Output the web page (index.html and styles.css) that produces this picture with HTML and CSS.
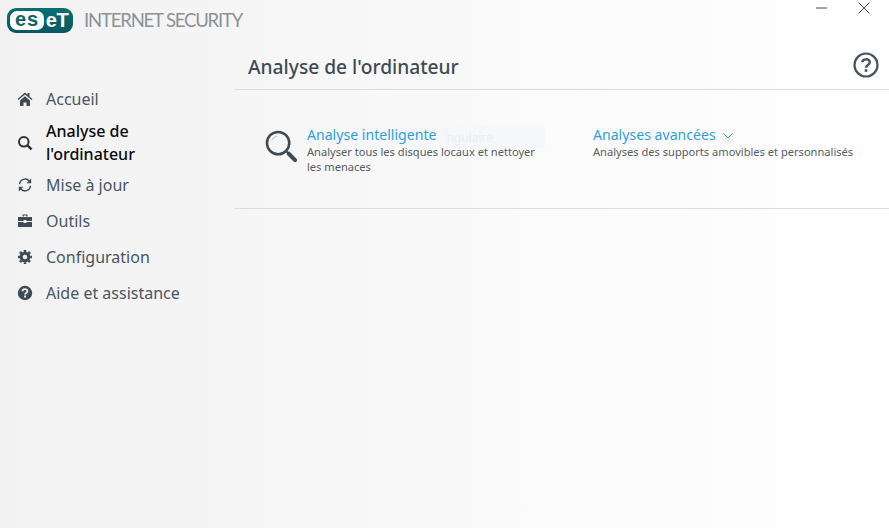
FILE: index.html
```html
<!DOCTYPE html>
<html lang="fr">
<head>
<meta charset="utf-8">
<title>ESET Internet Security</title>
<link rel="stylesheet" href="styles.css">
</head>
<body>
<div class="app">
  <aside class="sidebar">
    <div class="brand">
      <div class="logo"><span class="logo-white">es</span><span class="logo-dark">eT</span></div>
      <span class="product">INTERNET SECURITY</span>
    </div>
    <nav class="nav">
      <a class="nav-item">
        <svg class="nav-icon" viewBox="0 0 16 16"><path fill="#3f4a54" d="M8 1.600 0.600 8l.8 1L8 3.400 14.600 9l.8-1-2.900-2.500V2h-2v1.800zM3 9.500V15h3.500v-3.500h3V15H13V9.500L8 5.200z"/></svg>
        <span>Accueil</span>
      </a>
      <a class="nav-item active">
        <svg class="nav-icon" viewBox="0 0 16 16"><circle cx="6.800" cy="6.800" r="4.800" fill="none" stroke="#2c343b" stroke-width="2"/><path d="M10.400 10.400 14.600 14.400" stroke="#2c343b" stroke-width="2.400"/></svg>
        <span>Analyse de<br>l'ordinateur</span>
      </a>
      <a class="nav-item">
        <svg class="nav-icon" viewBox="0 0 16 16"><path fill="none" stroke="#3f4a54" stroke-width="1.500" d="M2.500 7.200A5.600 5.600 0 0 1 12.400 4.200M13.500 8.800A5.600 5.600 0 0 1 3.600 11.800"/><path fill="#3f4a54" d="M14.200 1.500v4.700H9.600zM1.800 14.500V9.800h4.600z"/></svg>
        <span>Mise à jour</span>
      </a>
      <a class="nav-item">
        <svg class="nav-icon" viewBox="0 0 16 16"><path fill="#3f4a54" d="M5.500 3.500V1.500h5v2h-1.200v-.9H6.700v.9zM1 4h14v4H9.500V7h-3v1H1zM1 9h5.500v1h3V9H15v5H1z"/></svg>
        <span>Outils</span>
      </a>
      <a class="nav-item">
        <svg class="nav-icon" viewBox="0 0 16 16"><circle cx="8" cy="8" r="3.800" fill="none" stroke="#3f4a54" stroke-width="3"/><g stroke="#3f4a54" stroke-width="2.600"><path d="M8 1v14M1 8h14M3 3l10 10M13 3 3 13" stroke-dasharray="2.600 9.600"/></g></svg>
        <span>Configuration</span>
      </a>
      <a class="nav-item">
        <svg class="nav-icon" viewBox="0 0 16 16"><circle cx="8" cy="8" r="7.200" fill="#3f4a54"/><path d="M5.500 6.300C5.600 3.500 10.500 3.500 10.500 6.200c0 1.800-2.400 1.800-2.400 3.300" fill="none" stroke="#f3f3f3" stroke-width="1.800"/><rect x="7.100" y="10.500" width="2" height="2" fill="#f3f3f3"/></svg>
        <span>Aide et assistance</span>
      </a>
    </nav>
  </aside>
  <main class="main">
    <div class="winbar">
      <svg class="win-btn" viewBox="0 0 12 12"><path d="M0 6h11" stroke="#3f4a54" stroke-width="1"/></svg>
      <svg class="win-btn" viewBox="0 0 12 12"><path d="M.5.500l11 11M11.500.500l-11 11" stroke="#3f4a54" stroke-width="1"/></svg>
    </div>
    <header class="page-head">
      <h1>Analyse de l'ordinateur</h1>
      <svg class="help" viewBox="0 0 26 26"><circle cx="13" cy="13" r="11.500" fill="none" stroke="#48535c" stroke-width="2.200"/><path d="M9.300 10.300C9.500 6.400 16.800 6.300 16.800 10.200c0 2.800-3.800 2.700-3.800 5.500" fill="none" stroke="#48535c" stroke-width="2.400"/><rect x="11.700" y="17.200" width="2.600" height="2.600" fill="#48535c"/></svg>
    </header>
    <section class="actions">
      <div class="action action-smart">
        <svg class="scan-icon" viewBox="0 0 34 34"><circle cx="13.500" cy="13.500" r="11.500" fill="none" stroke="#3f4a54" stroke-width="2.600"/><path d="M7 11a7 7 0 0 1 6-4.800" fill="none" stroke="#c9ced2" stroke-width="1.300"/><path d="M22 22l2.500 2.500" stroke="#3f4a54" stroke-width="2"/><path d="M24.500 24.500 31 31" stroke="#3f4a54" stroke-width="4.200" stroke-linecap="round"/></svg>
        <div class="action-text">
          <a class="action-title">Analyse intelligente</a>
          <p class="action-desc">Analyser tous les disques locaux et nettoyer les menaces</p>
        </div>
        <div class="ghost">ngulaire</div>
      </div>
      <div class="action action-adv">
        <div class="action-text">
          <a class="action-title">Analyses avancées<svg class="chev" viewBox="0 0 10 6"><path d="M.5.500 5 5 9.500.500" fill="none" stroke="#2f9fdc" stroke-width="1"/></svg></a>
          <p class="action-desc">Analyses des supports amovibles et personnalisés</p>
        </div>
      </div>
    </section>
  </main>
</div>
</body>
</html>
```
FILE: styles.css
```css
* { box-sizing: border-box; }
html, body { margin: 0; height: 100%; }
body {
  font-family: "Noto Sans", "Open Sans", sans-serif;
  overflow: hidden;
  background: linear-gradient(90deg, #f2f2f2 0%, #f5f5f5 25%, #fbfbfb 65%, #ffffff 100%);
}
.app { display: flex; width: 889px; height: 528px; }
.sidebar { width: 234px; flex: none; }
.main { flex: 1; display: flex; flex-direction: column; }
.brand { display: flex; gap: 11px; padding: 8px 0 0 7px; height: 81px; align-items: flex-start; }
.logo {
  display: flex; width: 66px; height: 25px; border-radius: 9px; background: linear-gradient(180deg, #0a6f74, #07585e);
  padding: 3px; font-family: "Liberation Sans", sans-serif; font-weight: 700; font-size: 20px; line-height: 17px; color: #fff; overflow: hidden; flex: none;
}
.logo-white { width: 34px; background: #fff; color: #0a6469; border-radius: 7px; text-align: center; letter-spacing: 1px; line-height: 17px; }
.logo-dark { flex: 1; text-align: center; line-height: 19px; letter-spacing: -0.500px; }
.product { font-family: "Lato", sans-serif; font-size: 18.500px; letter-spacing: -1.170px; color: #8a9299; line-height: 25px; white-space: nowrap; }
.nav { display: flex; flex-direction: column; }
.nav-item { display: flex; align-items: center; gap: 13px; padding-left: 17px; min-height: 36px; font-size: 16px; line-height: 23px; color: #4a5660; }
.nav-item.active { color: #0a0a0a; font-weight: 500; min-height: 50px; padding-top: 2px; }
.nav-icon { width: 16px; height: 16px; flex: none; }
.winbar { height: 44px; display: flex; justify-content: flex-end; gap: 30px; padding: 2px 19px 0 0; flex: none; }
.win-btn { width: 12px; height: 12px; }
.page-head { display: flex; align-items: center; justify-content: space-between; height: 46px; border-bottom: 1px solid #dcdcdc; padding: 0 10px 0 14px; flex: none; }
.page-head h1 { margin: 0; font-size: 19.200px; font-weight: 500; color: #3f4a54; }
.help { width: 26px; height: 26px; margin-bottom: 3px; }
.actions { display: flex; height: 119px; border-bottom: 1px solid #dcdcdc; }
.action { display: flex; position: relative; padding-top: 35px; }
.action-smart { width: 359px; padding-left: 31px; }
.scan-icon { width: 33px; height: 33px; margin-top: 5px; flex: none; margin-right: 9px; }
.action-text { width: 235px; position: relative; z-index: 1; }
.action-adv .action-text { width: auto; }
.action-title { display: block; font-size: 14.100px; line-height: 19px; color: #2f9fdc; }
.action-desc { margin: 0; font-size: 11.100px; line-height: 15px; color: #555d64; }
.chev { width: 10px; height: 6px; margin-left: 7px; vertical-align: 1px; }
.ghost { position: absolute; left: 113px; top: 37px; width: 198px; height: 21px; background: #f5f7fa; color: #eceef1; font-size: 12px; line-height: 21px; padding-right: 52px; text-align: right; white-space: nowrap; }
```
